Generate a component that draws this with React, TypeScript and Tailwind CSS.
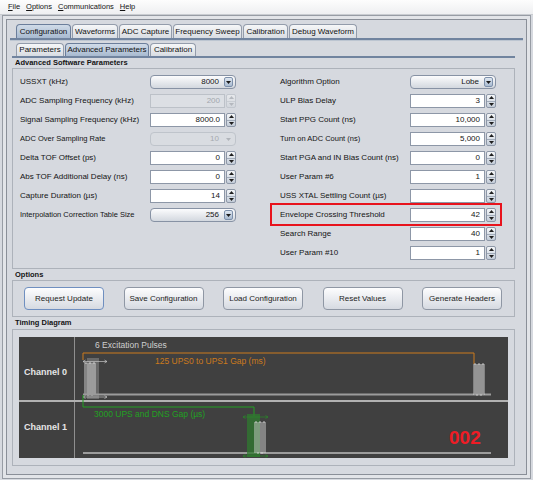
import React from "react";

const Up = ({ c = "#1e1e1e" }: { c?: string }) => (
  <svg width="5" height="3" viewBox="0 0 5 3">
    <path d="M0 3 L2.5 0 L5 3Z" fill={c} />
  </svg>
);
const Down = ({ c = "#1e1e1e" }: { c?: string }) => (
  <svg width="5" height="3" viewBox="0 0 5 3">
    <path d="M0 0 L2.5 3 L5 0Z" fill={c} />
  </svg>
);

function Spinner({ value, disabled }: { value: string; disabled?: boolean }) {
  return (
    <div className="flex h-[14px] w-[86px]">
      <div
        className={
          disabled
            ? "flex-1 flex items-center justify-end pr-[4px] bg-[#dcdfe4] border border-[#bcc1c8] text-[#a3a7ae]"
            : "flex-1 flex items-center justify-end pr-[4px] bg-white border border-[#8d97a7] text-[#141414]"
        }
      >
        <span className="text-[8px] leading-none">{value}</span>
      </div>
      <div
        className={
          disabled
            ? "w-[10px] ml-[1px] flex flex-col border border-[#c2c7ce] rounded-[2px] bg-linear-to-b from-[#e6e8eb] to-[#d3d7dd]"
            : "w-[10px] ml-[1px] flex flex-col border border-[#8d97a7] rounded-[2px] bg-linear-to-b from-[#f4f6f8] to-[#c3ccd8]"
        }
      >
        <div
          className={
            disabled
              ? "flex-1 flex items-center justify-center border-b border-[#c9cdd3]"
              : "flex-1 flex items-center justify-center border-b border-[#a2acba]"
          }
        >
          <Up c={disabled ? "#b4b8be" : "#1e1e1e"} />
        </div>
        <div className="flex-1 flex items-center justify-center">
          <Down c={disabled ? "#b4b8be" : "#1e1e1e"} />
        </div>
      </div>
    </div>
  );
}

function Combo({ value, disabled }: { value: string; disabled?: boolean }) {
  return (
    <div
      className={
        disabled
          ? "h-[14px] w-[86px] rounded-[4px] border border-[#bfc4cb] bg-[#d9dce1] flex items-center justify-end pr-[2px]"
          : "h-[14px] w-[86px] rounded-[4px] border border-[#8792a4] bg-linear-to-b from-[#fcfcfd] to-[#d3d8df] flex items-center justify-end pr-[2px]"
      }
    >
      <span
        className={
          disabled
            ? "text-[8px] leading-none mr-[5px] text-[#a6aab0]"
            : "text-[8px] leading-none mr-[5px] text-[#141414]"
        }
      >
        {value}
      </span>
      <div
        className={
          disabled
            ? "w-[9px] h-[10px] rounded-[2px] flex items-center justify-center"
            : "w-[9px] h-[10px] rounded-[2px] border border-[#7d90ab] bg-linear-to-b from-[#dfe7f1] to-[#a9bbd1] flex items-center justify-center"
        }
      >
        <Down c={disabled ? "#b0b4ba" : "#1a1a1a"} />
      </div>
    </div>
  );
}

type Row = {
  label: string;
  kind: "spin" | "combo";
  value: string;
  disabled?: boolean;
  small?: boolean;
  hl?: boolean;
};

const leftRows: Row[] = [
  { label: "USSXT (kHz)", kind: "combo", value: "8000" },
  { label: "ADC Sampling Frequency (kHz)", kind: "spin", value: "200", disabled: true },
  { label: "Signal Sampling Frequency (kHz)", kind: "spin", value: "8000.0" },
  { label: "ADC Over Sampling Rate", kind: "combo", value: "10", disabled: true, small: true },
  { label: "Delta TOF Offset (ps)", kind: "spin", value: "0" },
  { label: "Abs TOF Additional Delay (ns)", kind: "spin", value: "0" },
  { label: "Capture Duration (µs)", kind: "spin", value: "14" },
  { label: "Interpolation Correction Table Size", kind: "combo", value: "256", small: true },
];

const rightRows: Row[] = [
  { label: "Algorithm Option", kind: "combo", value: "Lobe" },
  { label: "ULP Bias Delay", kind: "spin", value: "3" },
  { label: "Start PPG Count (ns)", kind: "spin", value: "10,000" },
  { label: "Turn on ADC Count (ns)", kind: "spin", value: "5,000", small: true },
  { label: "Start PGA and IN Bias Count (ns)", kind: "spin", value: "0" },
  { label: "User Param #6", kind: "spin", value: "1" },
  { label: "USS XTAL Settling Count (µs)", kind: "spin", value: "" },
  { label: "Envelope Crossing Threshold", kind: "spin", value: "42", hl: true },
  { label: "Search Range", kind: "spin", value: "40" },
  { label: "User Param #10", kind: "spin", value: "1" },
];

function ParamRow({ r }: { r: Row }) {
  return (
    <div className="relative h-[19px] flex items-center">
      {r.hl && (
        <div className="absolute left-[-10px] right-[-6px] top-[-2.5px] bottom-[-1px] border-2 border-[#e8131d]" />
      )}
      <div
        className={
          r.small
            ? "w-[130px] text-[7.5px] leading-none whitespace-nowrap"
            : "w-[130px] text-[8px] leading-none whitespace-nowrap"
        }
      >
        {r.label}
      </div>
      {r.kind === "spin" ? (
        <Spinner value={r.value} disabled={r.disabled} />
      ) : (
        <Combo value={r.value} disabled={r.disabled} />
      )}
    </div>
  );
}

const tabs = [
  { label: "Configuration", cls: "w-[55px]", sel: true },
  { label: "Waveforms", cls: "w-[46px]", sel: false },
  { label: "ADC Capture", cls: "w-[53px]", sel: false },
  { label: "Frequency Sweep", cls: "w-[69px]", sel: false },
  { label: "Calibration", cls: "w-[45px]", sel: false },
  { label: "Debug Waveform", cls: "w-[68px]", sel: false },
];

const subTabs = [
  { label: "Parameters", cls: "w-[48px]", sel: false },
  { label: "Advanced Parameters", cls: "w-[84px]", sel: true },
  { label: "Calibration", cls: "w-[46px]", sel: false },
];

function Tab({ label, cls, sel }: { label: string; cls: string; sel: boolean }) {
  const base =
    "h-full flex items-center justify-center rounded-t-[4px] border border-b-0 text-[8px] leading-none whitespace-nowrap text-[#111] ";
  return (
    <div
      className={
        base +
        cls +
        (sel
          ? " border-[#6b7e9b] bg-linear-to-b from-[#d0dbe8] to-[#a8bad0]"
          : " border-[#939cab] bg-linear-to-b from-[#f6f7f8] to-[#d8dce2]")
      }
    >
      {label}
    </div>
  );
}

function Btn({ label, focus }: { label: string; focus?: boolean }) {
  return (
    <div
      className={
        focus
          ? "w-[80px] h-[23px] rounded-[4px] border border-[#6f8fc0] bg-linear-to-b from-[#fdfdfe] to-[#d6dae1] flex items-center justify-center text-[8px] leading-none text-[#1c1c1c]"
          : "w-[80px] h-[23px] rounded-[4px] border border-[#8f97a4] bg-linear-to-b from-[#fdfdfe] to-[#d6dae1] flex items-center justify-center text-[8px] leading-none text-[#1c1c1c]"
      }
    >
      {label}
    </div>
  );
}

function Pulses({ x, y0, y1, c }: { x: number; y0: number; y1: number; c: string }) {
  const d = `M${x} ${y1} V${y0} H${x + 2} V${y1} H${x + 4} V${y0} H${x + 6} V${y1} H${x + 8} V${y0} H${x + 10} V${y1}`;
  return <path d={d} fill="none" stroke={c} strokeWidth="0.9" />;
}

function Arrow({ x0, x1, y, c }: { x0: number; x1: number; y: number; c: string }) {
  return (
    <g stroke={c} strokeWidth="0.7" fill="none">
      <path d={`M${x0} ${y} H${x1}`} />
      <path d={`M${x0 + 2.5} ${y - 1.5} L${x0} ${y} L${x0 + 2.5} ${y + 1.5}`} />
      <path d={`M${x1 - 2.5} ${y - 1.5} L${x1} ${y} L${x1 - 2.5} ${y + 1.5}`} />
    </g>
  );
}

function Diagram() {
  const ff = "'Liberation Sans', Arial, sans-serif";
  return (
    <svg
      className="absolute inset-0 pointer-events-none"
      width="489"
      height="121"
      viewBox="0 0 489 121"
    >
      {/* channel 0 */}
      <text x="76" y="11" fontSize="8.5" fill="#cfcfcf" fontFamily={ff}>
        6 Excitation Pulses
      </text>
      <path d="M64 23 V16 H455 V27" fill="none" stroke="#cc7a1c" strokeWidth="1" />
      <text x="136" y="26.5" fontSize="8.5" fill="#cc7a1c" fontFamily={ff}>
        125 UPS0 to UPS1 Gap (ms)
      </text>
      <rect x="68" y="21" width="12" height="41" fill="#777777" opacity="0.75" />
      <Pulses x={66} y0={26} y1={58} c="#dadada" />
      <Arrow x0={64} x1={88} y={24.5} c="#c4c4c4" />
      <Arrow x0={64} x1={88} y={60} c="#c4c4c4" />
      <path d="M64 57.5 H472" stroke="#9c9c9c" strokeWidth="2" />
      <rect x="455" y="27" width="10" height="31" fill="#6a6a6a" opacity="0.8" />
      <Pulses x={455} y0={27} y1={58} c="#d2d2d2" />

      {/* channel 1 */}
      <path d="M64 58 V70 H235 V79" fill="none" stroke="#22a022" strokeWidth="1" />
      <text x="75" y="80" fontSize="8.5" fill="#22a022" fontFamily={ff}>
        3000 UPS and DNS Gap (µs)
      </text>
      <path d="M64 116 H472" stroke="#9c9c9c" strokeWidth="2" />
      <rect x="228" y="77" width="13" height="43" fill="#2f7a2f" opacity="0.75" />
      <Pulses x={236} y0={85} y1={116} c="#d8d8d8" />
      <Arrow x0={224} x1={249} y={80} c="#2a8a2a" />
      <Arrow x0={224} x1={249} y={119} c="#2a8a2a" />
      <text
        x="430"
        y="107"
        fontSize="19"
        fontWeight="bold"
        fill="#ee1c25"
        fontFamily={ff}
      >
        002
      </text>
    </svg>
  );
}

export default function App() {
  return (
    <div className="w-[533px] h-[480px] overflow-hidden bg-[#d6d9df] font-['Liberation_Sans',Arial,sans-serif] text-[#141414] flex flex-col">
      {/* menu bar */}
      <div className="h-[15px] shrink-0 bg-linear-to-b from-[#fdfdfd] to-[#eeeff1] border-b border-[#c9ccd1] flex items-center pl-[8px] gap-[6px] text-[7.5px] leading-none">
        <span>
          <span className="underline">F</span>ile
        </span>
        <span>
          <span className="underline">O</span>ptions
        </span>
        <span>
          <span className="underline">C</span>ommunications
        </span>
        <span>
          <span className="underline">H</span>elp
        </span>
      </div>

      {/* window frame */}
      <div className="ml-[2px] w-[529px] h-[464px] shrink-0 border border-[#979ca4] bg-[#e2e4e8] p-[3px]">
        <div className="h-full border border-[#8a8f98] bg-[#d6d9df] pt-[4px] pl-[5px] flex flex-col">
          {/* main tabs */}
          <div className="flex h-[14px] ml-[4px] gap-[1px] shrink-0">
            {tabs.map((t) => (
              <Tab key={t.label} {...t} />
            ))}
          </div>
          <div className="ml-[-2px] w-[513px] h-[2px] bg-[#71849f] shrink-0" />
          <div className="ml-[-2px] w-[513px] h-[1px] bg-[#bcc5d1] shrink-0" />
          <div className="h-[2px] shrink-0" />

          {/* sub tabs */}
          <div className="flex h-[13px] ml-[4px] gap-[1px] shrink-0">
            {subTabs.map((t) => (
              <Tab key={t.label} {...t} />
            ))}
          </div>
          <div className="w-[503px] h-[2px] bg-[#71849f] shrink-0" />

          {/* Advanced software params */}
          <div className="h-[10px] flex items-center pl-[3px] font-bold text-[7.5px] leading-none shrink-0">
            Advanced Software Parameters
          </div>
          <div className="w-[503px] h-[201px] shrink-0 border border-[#adb2ba] pt-[3.5px] pl-[7px] flex gap-[44px]">
            <div className="w-[216px] flex flex-col">
              {leftRows.map((r) => (
                <ParamRow key={r.label} r={r} />
              ))}
            </div>
            <div className="w-[216px] flex flex-col">
              {rightRows.map((r) => (
                <ParamRow key={r.label} r={r} />
              ))}
            </div>
          </div>

          {/* Options */}
          <div className="h-[11px] flex items-center pl-[3px] font-bold text-[7.5px] leading-none shrink-0">
            Options
          </div>
          <div className="w-[503px] h-[37px] shrink-0 border border-[#adb2ba] flex items-center justify-between pl-[11px] pr-[12px]">
            <Btn label="Request Update" focus />
            <Btn label="Save Configuration" />
            <Btn label="Load Configuration" />
            <Btn label="Reset Values" />
            <Btn label="Generate Headers" />
          </div>

          {/* Timing Diagram */}
          <div className="h-[12px] flex items-center pl-[3px] font-bold text-[7.5px] leading-none shrink-0">
            Timing Diagram
          </div>
          <div className="w-[503px] h-[137px] shrink-0 border border-[#adb2ba] pt-[7px] pb-[7px] px-[6px]">
            <div className="relative w-full h-full bg-[#404040] flex flex-col">
              <div className="h-[63px] flex">
                <div className="w-[56px] border-r border-[#8f8f8f] pl-[5px] pt-[31px] text-[9px] font-bold leading-none text-[#e6e6e6] whitespace-nowrap">
                  Channel 0
                </div>
              </div>
              <div className="h-[2px] bg-[#b2b2b2]" />
              <div className="h-[56px] flex">
                <div className="w-[56px] border-r border-[#8f8f8f] pl-[5px] pt-[21px] text-[9px] font-bold leading-none text-[#e6e6e6] whitespace-nowrap">
                  Channel 1
                </div>
              </div>
              <Diagram />
            </div>
          </div>
        </div>
      </div>
    </div>
  );
}
